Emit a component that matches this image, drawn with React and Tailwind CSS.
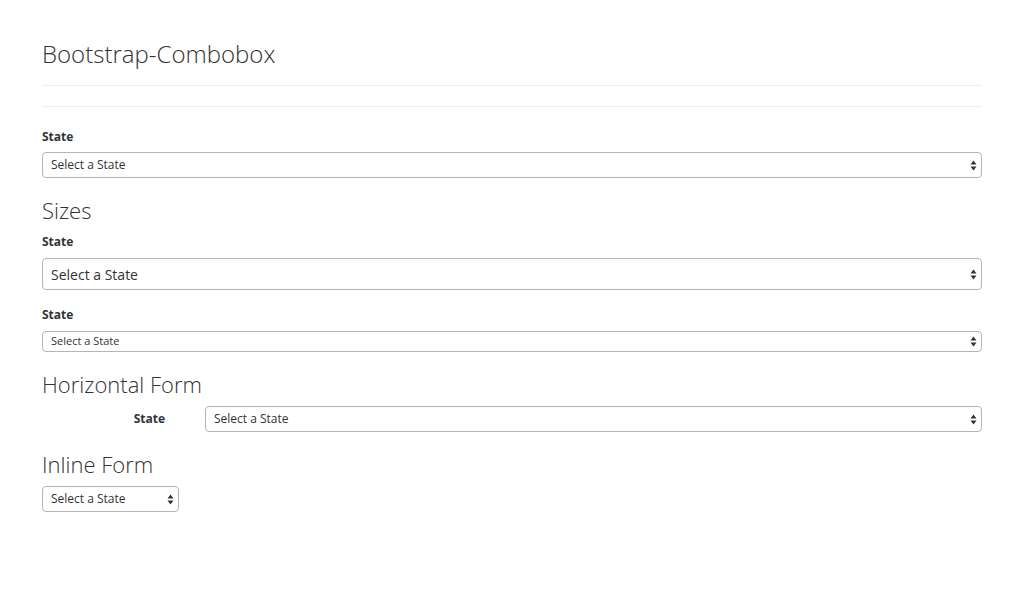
import React from "react";

function Arrows() {
  return (
    <svg width="7" height="11" viewBox="0 0 7 11" className="shrink-0">
      <path d="M3.5 0.5 L6.5 4.5 L0.5 4.5 Z" fill="#333" />
      <path d="M3.5 10.5 L6.5 6.5 L0.5 6.5 Z" fill="#333" />
    </svg>
  );
}

function FakeSelect({ h, pad, extra = "" }) {
  return (
    <div
      className={`flex items-center justify-between border border-[#b5b5b5] rounded-[4px] bg-white ${h} ${pad} ${extra}`}
    >
      <span className="text-[#333]">Select a State</span>
      <Arrows />
    </div>
  );
}

export default function App() {
  return (
    <div className="min-h-[612px] w-[1024px] bg-white text-[#333]" style={{ fontFamily: '"Open Sans", sans-serif' }}>
      <div className="ml-[42px] w-[940px] pt-[39px]">
        <h1 className="h-[29px] text-[24px] leading-[29px] font-light text-[#333]">Bootstrap-Combobox</h1>
        <div className="mt-[17px] h-px bg-[#eeeeee]" />
        <div className="mt-[20px] h-px bg-[#eeeeee]" />
        <div className="mt-[21px] h-[17px] text-[12px] leading-[17px] font-bold">State</div>
        <div className="mt-[7px]">
          <FakeSelect h="h-[26px]" pad="pl-[8px] pr-[4px] text-[12px]" />
        </div>
        <h2 className="mt-[20px] h-[24px] text-[22px] leading-[24px] font-light">Sizes</h2>
        <div className="mt-[11px] h-[17px] text-[12px] leading-[17px] font-bold">State</div>
        <div className="mt-[8px]">
          <FakeSelect h="h-[32px]" pad="pl-[8px] pr-[4px] text-[14px]" />
        </div>
        <div className="mt-[16px] h-[17px] text-[12px] leading-[17px] font-bold">State</div>
        <div className="mt-[8px]">
          <FakeSelect h="h-[21px]" pad="pl-[8px] pr-[4px] text-[11px]" />
        </div>
        <h2 className="mt-[20px] h-[24px] text-[22px] leading-[24px] font-light">Horizontal Form</h2>
        <div className="mt-[10px] flex items-center">
          <div className="w-[123px] text-right text-[12px] font-bold">State</div>
          <div className="ml-[40px] flex-1">
            <FakeSelect h="h-[26px]" pad="pl-[8px] pr-[4px] text-[12px]" />
          </div>
        </div>
        <h2 className="mt-[20px] h-[24px] text-[22px] leading-[24px] font-light">Inline Form</h2>
        <div className="mt-[10px]">
          <FakeSelect h="h-[26px]" pad="pl-[8px] pr-[4px] text-[12px]" extra="w-[137px]" />
        </div>
      </div>
    </div>
  );
}
